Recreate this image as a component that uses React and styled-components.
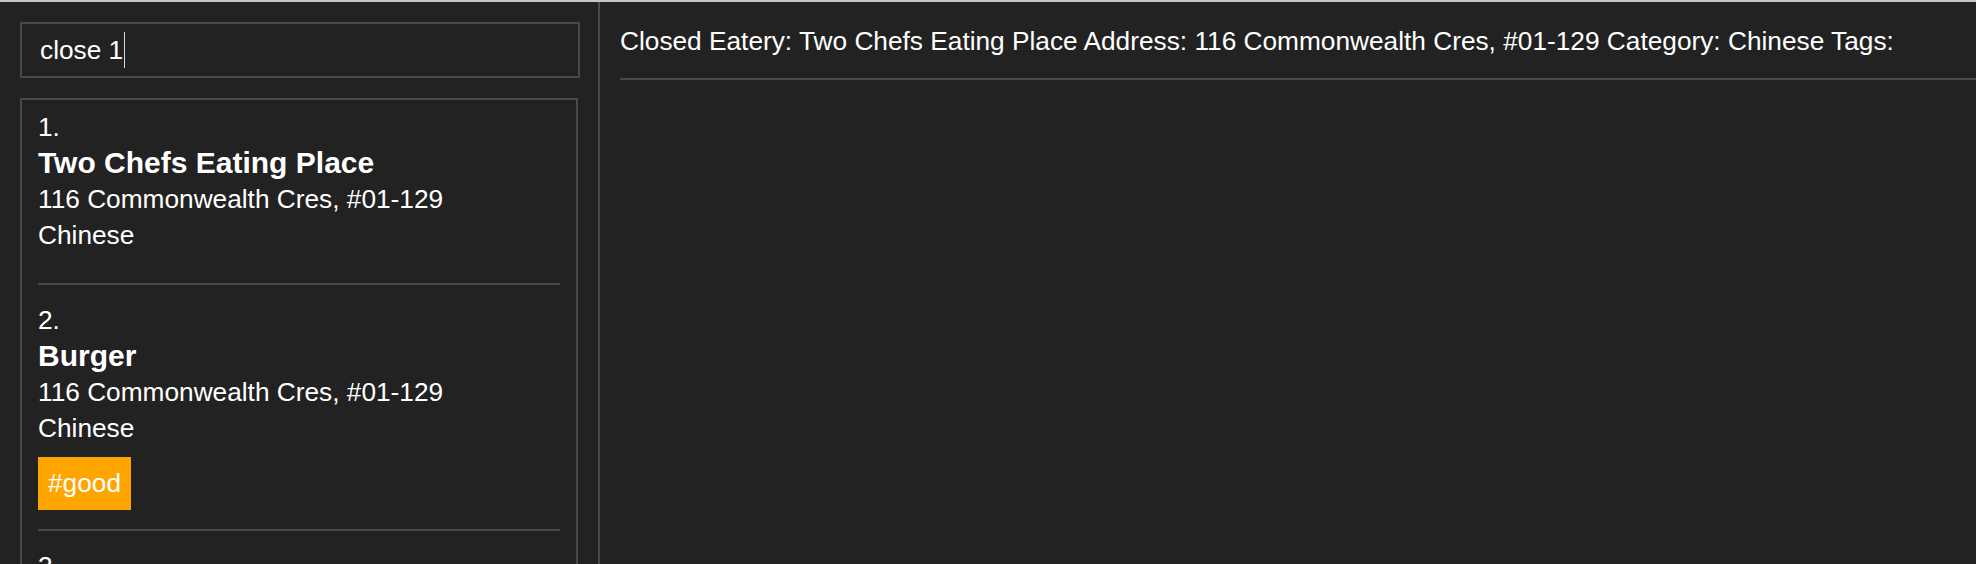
import styled, { createGlobalStyle } from "styled-components";

const GlobalStyle = createGlobalStyle`
	html, body {
		margin: 0;
		padding: 0;
		background-color: #222222;
	}
	* {
		box-sizing: border-box;
	}
`;

const Window = styled.div`
	display: grid;
	grid-template-columns: 598px 2px 1fr;
	height: 564px;
	overflow: hidden;
	border-top: 2px solid #c8c8c8;
	background-color: #222222;
	color: #ffffff;
	font-family: "Liberation Sans", Arial, sans-serif;
	font-size: 26.25px;
`;

const LeftPane = styled.aside`
	display: flex;
	flex-direction: column;
	gap: 20px;
	padding: 20px 0 0 20px;
	min-height: 0;
`;

const Divider = styled.div`
	background-color: #4a4a4a;
`;

const CommandBox = styled.div`
	display: flex;
	align-items: center;
	width: 560px;
	height: 56px;
	flex-shrink: 0;
	padding: 0 18px;
	border: 2px solid #4a4a4a;
	line-height: 36px;
	white-space: pre;
`;

const Caret = styled.span`
	display: inline-block;
	width: 1px;
	height: 36px;
	margin-left: 1px;
	background-color: #d8d8d8;
`;

const ListPanel = styled.div`
	width: 558px;
	flex: 1;
	padding: 0 16px;
	border: 2px solid #4a4a4a;
	border-bottom: none;
	overflow: hidden;
`;

const Item = styled.div`
	padding: 9px 0 19px;
	border-bottom: 2px solid #4a4a4a;
	margin-bottom: 8px;
`;

const Line = styled.div`
	line-height: 36px;
	font-size: ${(p) => (p.$title ? "30px" : "26.25px")};
	font-weight: ${(p) => (p.$title ? "bold" : "normal")};
	white-space: nowrap;
`;

const Tags = styled.div`
	display: flex;
	gap: 10px;
	margin-top: 11px;
`;

const Tag = styled.span`
	display: inline-block;
	padding: 12px 10px;
	line-height: 29px;
	background-color: #ffa500;
	color: #ffffff;
`;

const RightPane = styled.main`
	padding: 21px 0 0 20px;
	min-width: 0;
`;

const ResultText = styled.div`
	line-height: 36px;
	padding-bottom: 19px;
	border-bottom: 2px solid #4a4a4a;
	white-space: nowrap;
`;

const eateries = [
	{ name: "Two Chefs Eating Place", address: "116 Commonwealth Cres, #01-129", category: "Chinese", tags: [] },
	{ name: "Burger", address: "116 Commonwealth Cres, #01-129", category: "Chinese", tags: ["good"] },
	{ name: "Burger", address: "116 Commonwealth Cres, #01-129", category: "Chinese", tags: [] },
];

export default function App() {
	return (
		<>
			<GlobalStyle />
			<Window>
				<LeftPane>
					<CommandBox>
						close 1<Caret />
					</CommandBox>
					<ListPanel>
						{eateries.map((e, i) => (
							<Item key={i}>
								<Line>{i + 1}.</Line>
								<Line $title>{e.name}</Line>
								<Line>{e.address}</Line>
								<Line>{e.category}</Line>
								<Tags>
									{e.tags.map((t) => (
										<Tag key={t}>#{t}</Tag>
									))}
								</Tags>
							</Item>
						))}
					</ListPanel>
				</LeftPane>
				<Divider />
				<RightPane>
					<ResultText>
						Closed Eatery: Two Chefs Eating Place Address: 116 Commonwealth Cres, #01-129 Category: Chinese Tags:
					</ResultText>
				</RightPane>
			</Window>
		</>
	);
}
